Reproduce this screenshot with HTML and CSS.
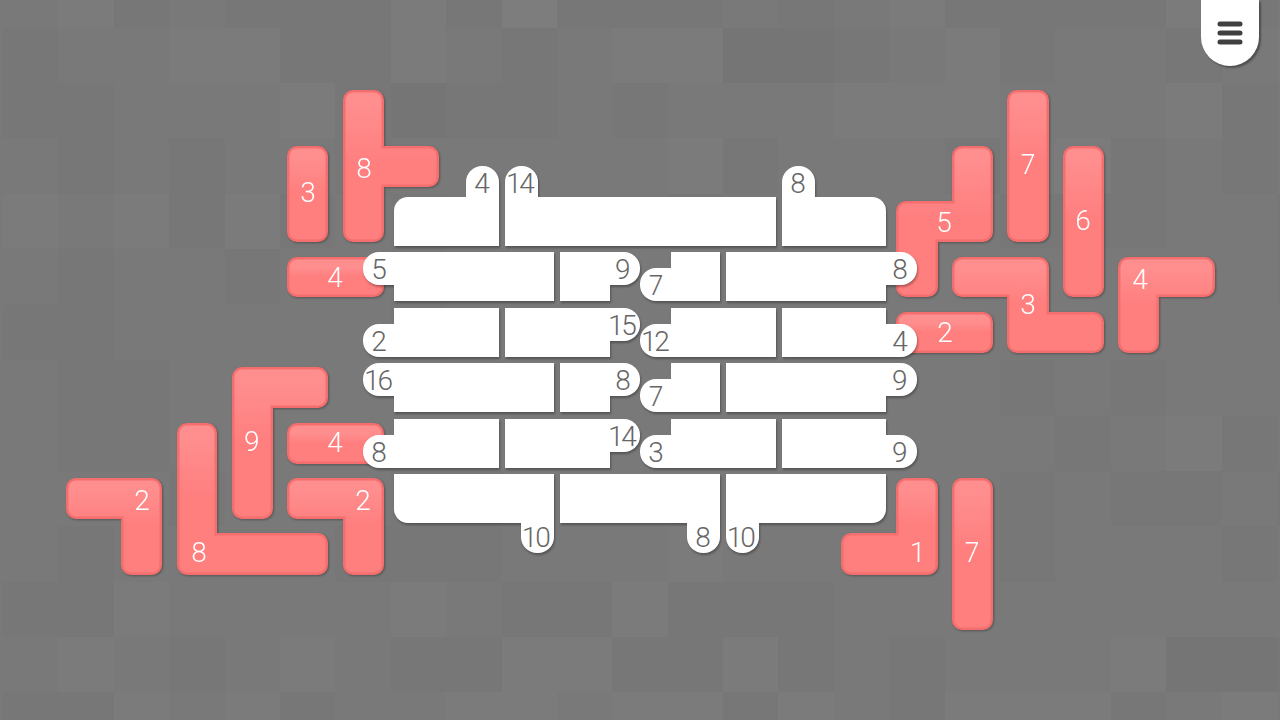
FILE: index.html
```
<!DOCTYPE html>
<html lang="en">
<head>
  <meta charset="UTF-8" />
  <meta name="viewport" content="width=device-width, initial-scale=1.0"/>
  <title>Number Blocks</title>
  <link rel="stylesheet" href="styles.css">
</head>
<body>
  <header class="topbar">
    <button class="menu-button" type="button" aria-label="Menu">
      <svg class="menu-icon" viewBox="0 0 24 24" aria-hidden="true">
        <path d="M2 3H22M2 12H22M2 21H22" />
      </svg>
    </button>
  </header>

  <main class="game">
    <svg class="scene" viewBox="0 0 1280 720" preserveAspectRatio="xMidYMid slice" role="group" aria-label="Puzzle board">
      <defs>
        <linearGradient id="piece-face" x1="0" y1="0" x2="0" y2="1">
          <stop class="face-top" offset="0" />
          <stop class="face-bottom" offset="0.5" />
        </linearGradient>
      </defs>
      <g id="tiles"></g>
      <g id="pieces"></g>
      <g class="board" id="board"></g>
      <g id="clues"></g>
    </svg>
  </main>

  <script src="game.js"></script>
</body>
</html>
```
FILE: styles.css
```
body {
  margin: 0;
  background: #797979;
  font-family: Roboto, "Liberation Sans", sans-serif;
  overflow: hidden;
}

.topbar {
  position: absolute;
  top: 0;
  right: 21px;
  z-index: 1;
}

.menu-button {
  display: flex;
  justify-content: center;
  width: 58px;
  height: 66px;
  padding: 21px 0 0;
  border: none;
  border-radius: 0 0 29px 29px;
  background: #fff;
  box-shadow: 2px 2px 2px rgba(0, 0, 0, 0.35);
  cursor: pointer;
}

.menu-icon {
  width: 24px;
  height: 24px;
  fill: none;
  stroke: #404040;
  stroke-width: 5;
  stroke-linecap: round;
  overflow: visible;
}

.game {
  height: 100vh;
}

.scene {
  display: block;
  width: 100%;
  height: 100%;
}

/* background tiles, dark to light */
.tile-0 { fill: #757575; }
.tile-1 { fill: #777777; }
.tile-2 { fill: #797979; }
.tile-3 { fill: #7b7b7b; }
.tile-4 { fill: #7d7d7d; }

/* pieces */
.piece {
  filter: drop-shadow(1px 1px 1px rgba(0, 0, 0, 0.3));
  cursor: grab;
}

.piece-edge,
.piece-face {
  stroke-linejoin: round;
}

.piece-edge {
  fill: #f46e6e;
  stroke: #f46e6e;
  stroke-width: 20;
}

.piece-face {
  fill: url(#piece-face);
  stroke: url(#piece-face);
  stroke-width: 15;
}

.face-top { stop-color: #ff8f8f; }
.face-bottom { stop-color: #ff7e7e; }

/* board */
.board {
  fill: #fff;
  filter: drop-shadow(1px 2px 1px rgba(0, 0, 0, 0.3));
}

.number {
  font-size: 28px;
  font-weight: 350;
  font-variant-numeric: proportional-nums;
  text-anchor: middle;
  pointer-events: none;
}

.number-piece {
  fill: #fff;
}

.number-clue {
  fill: #666;
}
```
FILE: game.js
```
const SVG_NS = "http://www.w3.org/2000/svg";

// shade of each background tile, one string per row
const tiles = [
  "2231211131411121231111312",
  "2122331132123300123122123",
  "2112223101121222333222312",
  "2212122122222312221231212",
  "2323131212222122222111221",
  "2212212212222222222222221",
  "2112222212222222222222222",
  "2211222222222222222121222",
  "2211222222222222222212312",
  "2222122211222222222121121",
  "2212222111222322222122212",
  "2113222232113111222222222",
  "2232123211331131212223001",
  "2113231223323313213331232"
];

// outline, number, number position
const pieces = [
  ["M297 156H318V232H297Z", 3, 308, 202],
  ["M353 100H374V156H429V177H374V232H353Z", 8, 364, 178],
  ["M297 267H374V287H297Z", 4, 335, 287],
  ["M242 377H318V398H263V509H242Z", 9, 252, 451],
  ["M187 433H207V543H318V565H187Z", 8, 199, 562],
  ["M76 488H152V565H131V509H76Z", 2, 142, 510],
  ["M297 433H374V454H297Z", 4, 335, 452],
  ["M297 488H374V565H353V509H297Z", 2, 363, 510],
  ["M962 156H983V232H928V287H906V211H962Z", 5, 944, 232],
  ["M1017 100H1039V232H1017Z", 7, 1028, 174],
  ["M1073 156H1094V287H1073Z", 6, 1083, 230],
  ["M962 267H1039V322H1094V343H1017V287H962Z", 3, 1028, 314],
  ["M1128 267H1205V287H1149V343H1128Z", 4, 1140, 289],
  ["M906 322H983V343H906Z", 2, 945, 342],
  ["M906 488H928V565H851V543H906Z", 1, 917, 562],
  ["M962 488H983V620H962Z", 7, 972, 562]
];

const board = [
  // row 1
  "M394 246V211a14 14 0 0 1 14-14H499V246Z",
  "M505 197H776V246H505Z",
  "M782 197H872a14 14 0 0 1 14 14V246H782Z",
  // row 2
  "M394 252H554V301H394Z",
  "M560 252H610V301H560Z",
  "M671 252H720V301H671Z",
  "M726 252H886V301H726Z",
  // row 3
  "M394 308H499V357H394Z",
  "M505 308H610V357H505Z",
  "M671 308H776V357H671Z",
  "M782 308H886V357H782Z",
  // row 4
  "M394 363H554V412H394Z",
  "M560 363H610V412H560Z",
  "M671 363H720V412H671Z",
  "M726 363H886V412H726Z",
  // row 5
  "M394 419H499V468H394Z",
  "M505 419H610V468H505Z",
  "M671 419H776V468H671Z",
  "M782 419H886V468H782Z",
  // row 6
  "M394 474H554V523H408a14 14 0 0 1-14-14Z",
  "M560 474H720V523H560Z",
  "M726 474H886V509a14 14 0 0 1-14 14H726Z"
];

// side that the tab sticks out of, left, top, number
const clues = [
  ["up", 466, 166, 4], ["up", 505, 166, 14], ["up", 782, 166, 8],
  ["left", 363, 252, 5], ["right", 607, 252, 9], ["left", 640, 268, 7], ["right", 884, 252, 8],
  ["left", 363, 324, 2], ["right", 607, 308, 15], ["left", 640, 324, 12], ["right", 884, 324, 4],
  ["left", 363, 363, 16], ["right", 607, 363, 8], ["left", 640, 379, 7], ["right", 884, 363, 9],
  ["left", 363, 435, 8], ["right", 607, 419, 14], ["left", 640, 435, 3], ["right", 884, 435, 9],
  ["down", 521, 520, 10], ["down", 687, 520, 8], ["down", 726, 520, 10]
];

const TAB = 33;
const TAB_LENGTH = 50;

function add(parent, name, attrs, text) {
  const el = document.createElementNS(SVG_NS, name);
  for (const key in attrs) el.setAttribute(key, attrs[key]);
  if (text !== undefined) el.textContent = text;
  parent.appendChild(el);
  return el;
}

function drawTiles() {
  const layer = document.getElementById("tiles");
  const size = 720 / 13;
  const left = i => Math.round(640 + (i - 12.5) * size);
  const top = i => Math.round(360 + (i - 7) * size);
  tiles.forEach((row, y) => {
    [...row].forEach((shade, x) => {
      add(layer, "rect", {
        class: "tile-" + shade,
        x: left(x),
        y: top(y),
        width: left(x + 1) - left(x),
        height: top(y + 1) - top(y)
      });
    });
  });
}

function drawPieces() {
  const layer = document.getElementById("pieces");
  pieces.forEach(([d, number, x, y]) => {
    const piece = add(layer, "g", { class: "piece" });
    add(piece, "path", { class: "piece-edge", d });
    add(piece, "path", { class: "piece-face", d });
    add(piece, "text", { class: "number number-piece", x, y }, number);
  });
}

function drawBoard() {
  const layer = document.getElementById("board");
  const labels = document.getElementById("clues");
  board.forEach(d => add(layer, "path", { d }));
  clues.forEach(([side, x, y, number]) => {
    const upright = side === "up" || side === "down";
    // the far end of a tab is tucked into its block
    add(layer, "rect", {
      x: side === "right" ? x + TAB - TAB_LENGTH : x,
      y: side === "down" ? y + TAB - TAB_LENGTH : y,
      width: upright ? TAB : TAB_LENGTH,
      height: upright ? TAB_LENGTH : TAB,
      rx: 16
    });
    add(labels, "text", { class: "number number-clue", x: x + 16, y: y + 27 }, number);
  });
}

drawTiles();
drawPieces();
drawBoard();
```
